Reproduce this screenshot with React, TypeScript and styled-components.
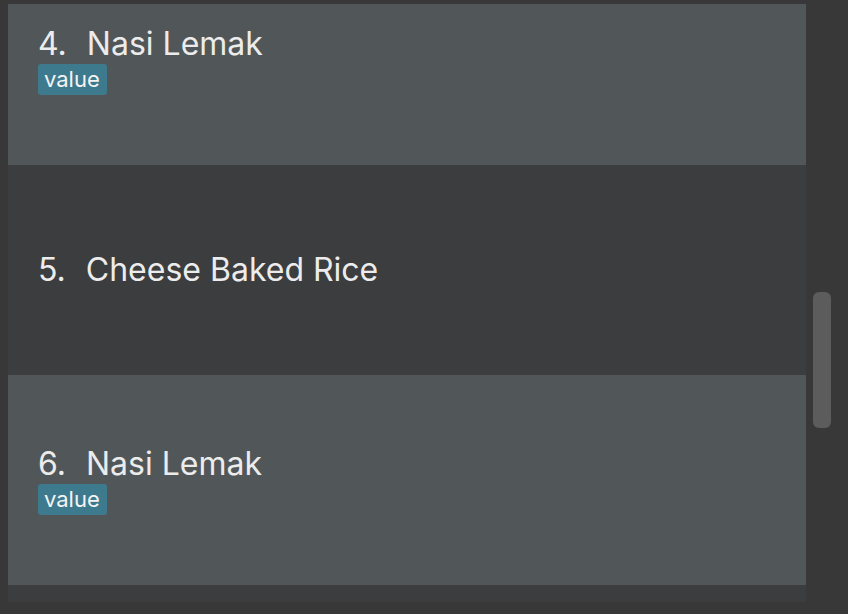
import React, { useLayoutEffect, useRef } from "react";
import styled, { createGlobalStyle } from "styled-components";

const GlobalStyle = createGlobalStyle`
    html, body {
        margin: 0;
        padding: 0;
        background-color: #383838;
        font-family: Inter, "Helvetica Neue", Roboto, sans-serif;
    }
`;

const Window = styled.div`
    width: 848px;
    height: 614px;
    box-sizing: border-box;
    padding: 4px 0 12px 8px;
    display: flex;
    background-color: #383838;
`;

const Viewport = styled.div`
    flex: 1;
    height: 100%;
    overflow: hidden;
`;

const Cell = styled.div<{ $light: boolean }>`
    height: 210px;
    box-sizing: border-box;
    padding: 0 30px;
    display: flex;
    flex-direction: column;
    justify-content: center;
    background-color: ${(p) => (p.$light ? "#515759" : "#3c3d3f")};
`;

const Title = styled.div`
    display: flex;
    align-items: baseline;
    gap: 20px;
    font-size: 32px;
    line-height: 36px;
    color: #ececec;
`;

const Tags = styled.div`
    display: flex;
    gap: 6px;
    margin-top: 2px;
`;

const Tag = styled.span`
    height: 31px;
    padding: 0 7px 0 6px;
    display: flex;
    align-items: center;
    border-radius: 3px;
    background-color: #3e7a8e;
    color: #f4f4f4;
    font-size: 22px;
`;

const Track = styled.div`
    width: 42px;
    height: 100%;
    box-sizing: border-box;
    padding: 288px 17px 0 7px;
`;

const Thumb = styled.div`
    height: 136px;
    border-radius: 6px;
    background-color: #5c5c5c;
`;

type Person = { index: number; name: string; tags: string[] };

const people: Person[] = Array.from({ length: 9 }, (_, i) => i + 1).map((n) =>
    n % 2 === 0
        ? { index: n, name: "Nasi Lemak", tags: ["value"] }
        : { index: n, name: "Cheese Baked Rice", tags: [] }
);

function App() {
    const listRef = useRef<HTMLDivElement>(null);

    // list is scrolled so that #4 is partly hidden at the top
    useLayoutEffect(() => {
        if (listRef.current) listRef.current.scrollTop = 3 * 210 + 49;
    }, []);

    return (
        <>
            <GlobalStyle />
            <Window>
                <Viewport ref={listRef}>
                    {people.map((p) => (
                        <Cell key={p.index} $light={p.index % 2 === 0}>
                            <Title>
                                <span>{p.index}.</span>
                                <span>{p.name}</span>
                            </Title>
                            {p.tags.length > 0 && (
                                <Tags>
                                    {p.tags.map((t) => (
                                        <Tag key={t}>{t}</Tag>
                                    ))}
                                </Tags>
                            )}
                        </Cell>
                    ))}
                </Viewport>
                <Track>
                    <Thumb />
                </Track>
            </Window>
        </>
    );
}

export default App;
